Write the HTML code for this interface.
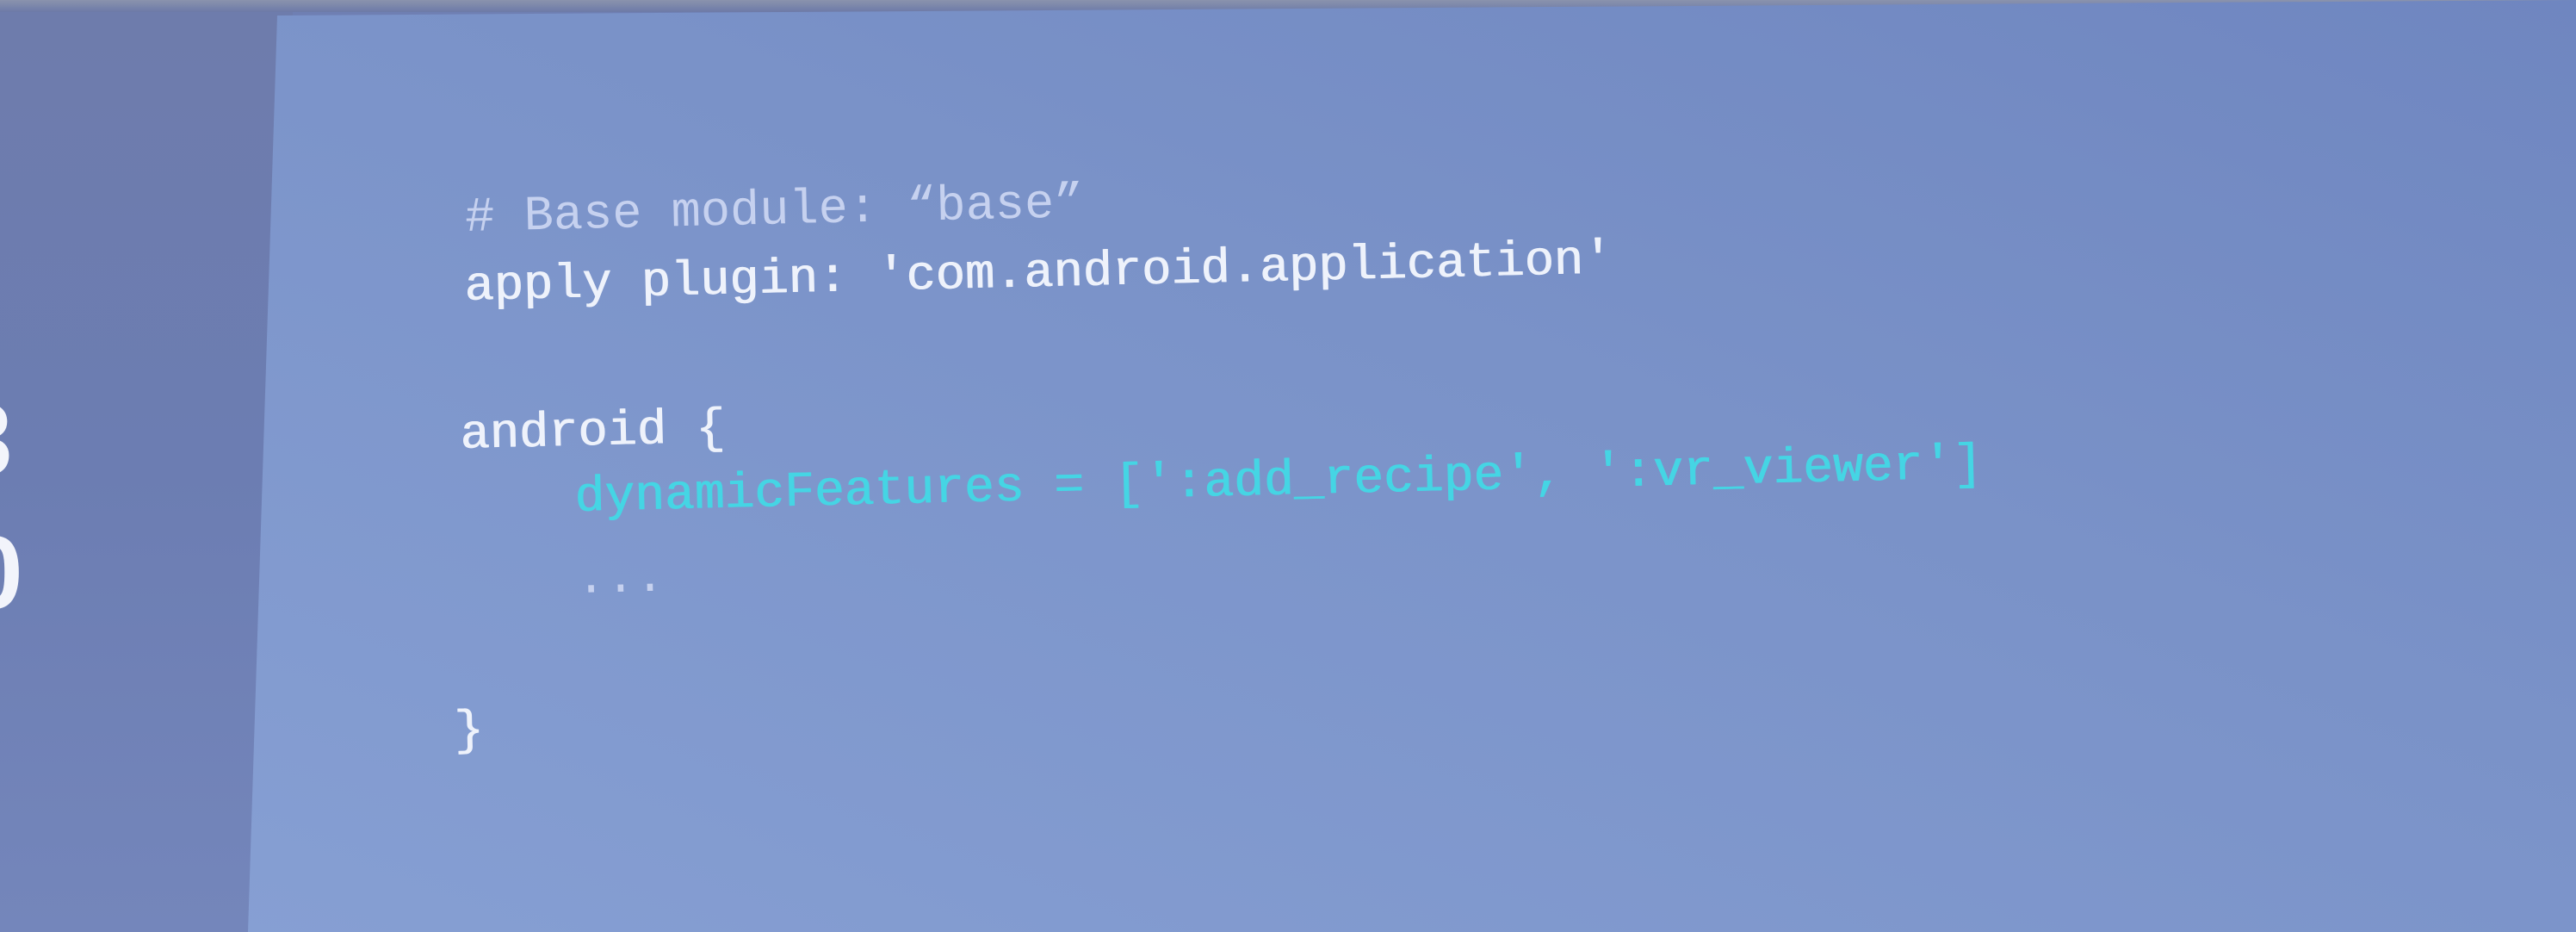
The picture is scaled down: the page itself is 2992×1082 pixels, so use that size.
<!DOCTYPE html>
<html><head><style>
html,body{margin:0;padding:0}
body{width:2992px;height:1082px;overflow:hidden;position:relative;background:#6f7fb3;font-family:"Liberation Mono",monospace}
.top{position:absolute;left:0;top:0;width:2992px;height:14px;background:linear-gradient(#8a93ad,#6d7aa8)}
.left{position:absolute;left:0;top:10px;width:340px;height:1072px;background:linear-gradient(180deg,#6e7cac 0%,#6c7db2 50%,#7486bb 100%)}
.panel{position:absolute;left:0;top:0;width:2992px;height:1082px;
 clip-path:polygon(322px 18px,2992px 0,2992px 1082px,288px 1082px);
 background:linear-gradient(200deg,#6f86c0 0%,#7a92c8 40%,#87a0d4 100%)}
.l{position:absolute;white-space:pre;font-size:57px;transform-origin:0 100%;transform:rotate(-1.35deg);line-height:1}
.c{color:#c6d1ef}
.w{color:#eef2fb;text-shadow:1px 0 0 #eef2fb}
.t{color:#45d5e4;font-size:58px;text-shadow:1px 0 0 #45d5e4}
.big{position:absolute;color:#f2f4fb;font-family:"Liberation Sans",sans-serif;font-weight:bold;font-size:120px;line-height:1}
</style></head><body>
<div class="left"></div>
<div class="top"></div>
<div class="panel"></div>
<div class="big" style="left:-52px;top:450px">3</div>
<div class="big" style="left:-40px;top:605px">0</div>
<div class="l c" style="left:541px;top:226px"># Base module: “base”</div>
<div class="l w" style="left:540px;top:306px">apply plugin: 'com.android.application'</div>
<div class="l w" style="left:535px;top:478px">android {</div>
<div class="l t" style="left:668px;top:550px">dynamicFeatures = [':add_recipe', ':vr_viewer']</div>
<div class="l c" style="left:670px;top:646px">...</div>
<div class="l w" style="left:528px;top:822px">}</div>
</body></html>
